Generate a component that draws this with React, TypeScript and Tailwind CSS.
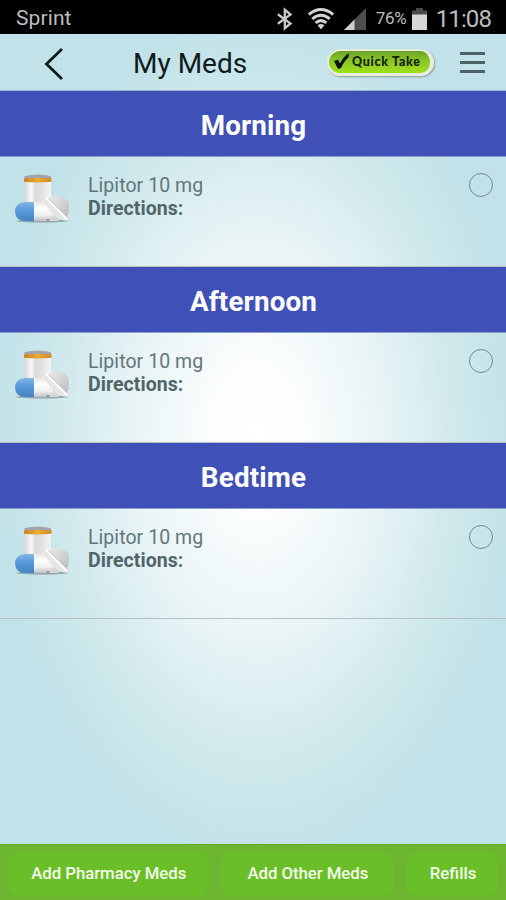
import React from "react";

const periods = ["Morning", "Afternoon", "Bedtime"];

function Bluetooth() {
  return (
    <svg width="18" height="24" viewBox="0 0 18 24" className="shrink-0" fill="none" stroke="#c9c9c9" strokeWidth="2.3">
      <path d="M1.8 7.2L14.5 16.5L8.8 21.2V2.8L14.5 7.5L1.8 16.8" />
    </svg>
  );
}

function Wifi() {
  return (
    <svg width="28" height="24" viewBox="0 0 28 24" className="shrink-0" fill="none" stroke="#d2d2d2" strokeWidth="3">
      <path d="M1.8 7.5Q14 -2.4 26.2 7.5" />
      <path d="M5.2 11.8Q14 4.6 22.8 11.8" />
      <path d="M8.6 15.8Q14 11.4 19.4 15.8" />
      <path d="M10.6 18.3Q14 15.6 17.4 18.3L14 22.6Z" fill="#d2d2d2" stroke="none" />
    </svg>
  );
}

function Signal() {
  return (
    <svg width="22" height="22" viewBox="0 0 22 22" className="shrink-0">
      <path d="M0 22L22 0V22Z" fill="#4d4d4d" />
      <path d="M0 22L10.5 11.5V22Z" fill="#d0d0d0" />
    </svg>
  );
}

function Battery() {
  return (
    <svg width="15" height="22" viewBox="0 0 15 22" className="shrink-0">
      <path d="M4 0H11V2.5H15V7H0V2.5H4Z" fill="#4a4a4a" />
      <path d="M0 6.5H15V22H0Z" fill="#d6d6d6" />
    </svg>
  );
}

function Pills({ id }: { id: string }) {
  return (
    <svg width="56" height="50" viewBox="0 0 56 50" className="shrink-0">
      <defs>
        <linearGradient id={id + "glass"}>
          <stop offset="0" stopColor="#d3d6d8" />
          <stop offset=".25" stopColor="#f8f8f9" />
          <stop offset=".42" stopColor="#d8d8da" />
          <stop offset="1" stopColor="#f3f3f4" />
        </linearGradient>
        <linearGradient id={id + "white"} x2="0" y2="1">
          <stop offset="0" stopColor="#e8e8ea" />
          <stop offset=".35" stopColor="#fff" />
          <stop offset=".7" stopColor="#eeeeef" />
          <stop offset="1" stopColor="#bfc1c4" />
        </linearGradient>
        <linearGradient id={id + "blue"} x2="0" y2="1">
          <stop offset="0" stopColor="#86b7e2" />
          <stop offset=".4" stopColor="#5a9bd9" />
          <stop offset="1" stopColor="#4484c2" />
        </linearGradient>
        <linearGradient id={id + "cap"}>
          <stop offset="0" stopColor="#c98219" />
          <stop offset=".5" stopColor="#f0a930" />
          <stop offset="1" stopColor="#d28a1d" />
        </linearGradient>
        <linearGradient id={id + "tablet"} x2="1" y2="1">
          <stop offset="0" stopColor="#e9e9eb" />
          <stop offset="1" stopColor="#b9bdc0" />
        </linearGradient>
      </defs>
      <ellipse cx="27" cy="47" rx="26" ry="1.5" fill="#6f8588" opacity=".65" />
      <path d="M9.5 8H36V29Q36 33 32 33H13Q9.5 33 9.5 29Z" fill={"url(#" + id + "glass)"} />
      <path d="M9.5 2.3Q23 -1.5 36 2.3V6H9.5Z" fill="#a3a5a6" />
      <path d="M9 4.6Q23 3.4 36.5 4.6V7.8Q23 9.2 9 7.8Z" fill={"url(#" + id + "cap)"} />
      <path d="M34 25C43 19 54 23 54 31C54 39 53 43 49 44Z" fill={"url(#" + id + "tablet)"} />
      <path d="M9 28H31Q39 29 39 37.5T31 47H9Q0 46 0 37.5T9 28Z" fill={"url(#" + id + "white)"} />
      <path d="M9 28H19V47H9Q0 46 0 37.5T9 28Z" fill={"url(#" + id + "blue)"} />
      <path d="M31 24C35 26 47 37 53 44.5Q53 47 49 46.5Q39 43 35 37Q30 31 31 24Z" fill="#e4e5e6" />
      <path d="M31.5 24.5L51.5 44.5" stroke="#fff" strokeWidth="2" strokeLinecap="round" />
      <path d="M33.5 24.5L53 43.5" stroke="#b4b8ba" strokeWidth=".8" />
      <path d="M31 47Q38 45 39 40L44 47Z" fill="#d7d6d5" />
      <ellipse cx="33" cy="46" rx="2" ry="1" fill="#777" opacity=".6" />
    </svg>
  );
}

function Period({ name }: { name: string }) {
  return (
    <section className="h-[176px]">
      <h2 className="flex h-[66px] items-center justify-center border-b border-[#8d9bd3] bg-[#3f50b6] pt-1 pl-px text-[27.8px] font-bold tracking-[0.15px] text-white">
        {name}
      </h2>
      <div className="flex h-[110px] items-start border-b border-[#b9bfc5] pl-[15px] pr-[13px] pt-[17px]">
        <Pills id={name} />
        <div className="ml-[17px] flex-1 text-[19.5px] leading-[23px] tracking-[0.06px] text-[#63777a]">
          <p>Lipitor 10 mg</p>
          <p className="font-bold text-[#51666a]">Directions:</p>
        </div>
        <span className="-mt-px size-6 rounded-full border border-[#76898e]" />
      </div>
    </section>
  );
}

export default function App() {
  return (
    <div className="flex h-[900px] w-[506px] flex-col overflow-hidden bg-[radial-gradient(ellipse_265px_430px_at_257px_440px,#ffffff_0%,#fbfdfe_18%,#e6f3f5_50%,#d0e9ec_75%,#c0e2e8_100%)] font-[Roboto,sans-serif]">
      <div className="flex h-[34px] shrink-0 items-center bg-black pl-4 pr-[15px] pt-[3px] text-[#bdbdbd]">
        <span className="text-[21px] tracking-[0.1px]">Sprint</span>
        <div className="ml-auto flex items-center">
          <Bluetooth />
          <span className="w-[13px]" />
          <Wifi />
          <span className="w-[9px]" />
          <Signal />
          <span className="ml-[10px] w-[36px] text-[17px] tracking-[-0.3px]">76%</span>
          <Battery />
          <span className="ml-[9px] text-[24px] tracking-[-0.9px]">11:08</span>
        </div>
      </div>
      <header className="flex h-[57px] shrink-0 items-center border-b border-[#9fb2d4] pl-[44px] pr-[21px]">
        <svg width="20" height="34" viewBox="0 0 20 34" className="mt-1" fill="none" stroke="#10191b" strokeWidth="2.8">
          <path d="M18 2L2.5 17L18 32" />
        </svg>
        <h1 className="ml-[69px] pt-1 text-[28px] text-[#111b1e]">My Meds</h1>
        <div className="ml-auto flex h-[27px] w-[107px] items-center rounded-full border-2 border-r-[4px] border-b-[3px] border-[#e6ece0] bg-linear-to-b from-[#6ba426] via-[#8cc928] to-[#9ee018] pl-[5px] shadow-[1px_1px_2px_#8b9b97]">
          <svg width="16" height="17" viewBox="0 0 16 17" className="shrink-0" fill="#0b1305">
            <path d="M0 8L4 6.5L6 10.5Q9 4 15 0L14.5 4Q9 10 7 15L4 16Z" />
          </svg>
          <span className="ml-[2px] pt-px font-[Lato,sans-serif] text-[12.5px] font-black tracking-[0.7px] whitespace-nowrap text-[#142304]">Quick Take</span>
        </div>
        <div className="ml-[26px] flex w-[25px] flex-col gap-[6px]">
          <span className="h-[3px] bg-[#4e6167]" />
          <span className="h-[3px] bg-[#4e6167]" />
          <span className="h-[3px] bg-[#4e6167]" />
        </div>
      </header>
      <main className="flex-1">
        {periods.map((name) => (
          <Period key={name} name={name} />
        ))}
      </main>
      <footer className="flex h-14 shrink-0 items-center gap-3 border-t border-[#64ab2d] bg-[#6db632] px-2 pt-[2px] text-[16.8px] font-medium text-[#f3fbe9]">
        <button className="h-11 w-[201px] rounded-xl bg-[#6abf28] pl-px tracking-[-0.05px]">Add Pharmacy Meds</button>
        <button className="h-11 w-[174px] rounded-xl bg-[#6abf28] pl-px tracking-[-0.05px]">Add Other Meds</button>
        <button className="h-11 w-[92px] rounded-xl bg-[#6abf28] pl-[2px]">Refills</button>
      </footer>
    </div>
  );
}
